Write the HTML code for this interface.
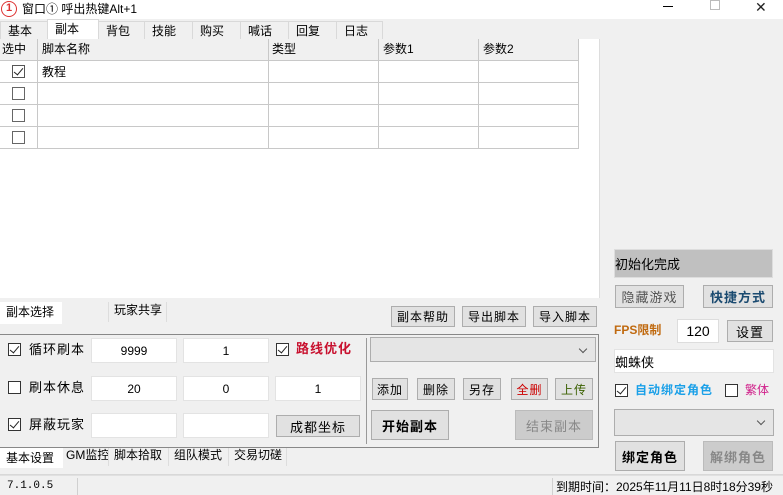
<!DOCTYPE html>
<html><head><meta charset="utf-8"><style>
*{box-sizing:border-box;margin:0;padding:0}
body{width:783px;height:495px;position:relative;background:#f0f0f0;font-family:"Liberation Sans","Noto Sans CJK SC",sans-serif;font-size:12px;color:#000;overflow:hidden}
.a{position:absolute}
.t{position:absolute;white-space:nowrap;line-height:1}
.btn{position:absolute;background:#e1e1e1;border:1px solid #adadad;text-align:center;font-size:12px;display:flex;align-items:center;justify-content:center;letter-spacing:1px}
.inp{position:absolute;background:#fff;border:1px solid #e3e3e3;display:flex;align-items:center;justify-content:center;font-size:12px}
.cb{position:absolute;width:13px;height:13px;border:1px solid #333;background:#fff}
.cb.c::after{content:"";position:absolute;left:3px;top:0px;width:4px;height:8px;border:solid #222;border-width:0 1.5px 1.5px 0;transform:rotate(40deg)}
.tab{position:absolute;top:21px;height:18px;border:1px solid #d9d9d9;border-bottom:none;background:#f0f0f0;font-size:12px;line-height:14px;padding:2px 0 0 7px}
.cell{position:absolute;border-right:1px solid #c8c8c8;border-bottom:1px solid #c8c8c8}
.dd{position:absolute;background:#e5e5e5;border:1px solid #adadad}
.dd::after{content:"";position:absolute;right:9px;top:8px;width:5px;height:5px;border:solid #555;border-width:0 1px 1px 0;transform:rotate(45deg)}
</style></head><body>
<div class="a" style="left:0;top:0;width:783px;height:19px;background:#fff"></div>
<div class="a" style="left:1px;top:1px;width:16px;height:16px;border:1.5px solid #d33;border-radius:50%;color:#d33;font-size:11px;text-align:center;line-height:13px;font-weight:bold">1</div>
<div class="t" style="left:22px;top:3px;font-size:12px">窗口① 呼出热键Alt+1</div>
<div class="a" style="left:663px;top:6px;width:10px;height:1px;background:#000"></div>
<div class="a" style="left:710px;top:0px;width:10px;height:10px;border:1px solid #bbb"></div>
<div class="t" style="left:755px;top:0px;font-size:14px;color:#222">✕</div>
<div class="tab" style="left:0;width:48px">基本</div>
<div class="tab" style="left:98px;width:47px">背包</div>
<div class="tab" style="left:144px;width:49px">技能</div>
<div class="tab" style="left:192px;width:49px">购买</div>
<div class="tab" style="left:240px;width:49px">喊话</div>
<div class="tab" style="left:288px;width:49px">回复</div>
<div class="tab" style="left:336px;width:47px">日志</div>
<div class="tab" style="left:47px;top:19px;height:21px;width:52px;background:#fff;padding-top:2px">副本</div>
<div class="a" style="left:0;top:39px;width:600px;height:259px;background:#fff;border-right:1px solid #ddd"></div>
<div class="a" style="left:0;top:39px;width:579px;height:21px;background:#f0f0f0"></div>
<div class="cell" style="left:0;top:39px;width:38px;height:22px"></div><div class="t" style="left:2px;top:43px">选中</div>
<div class="cell" style="left:37px;top:39px;width:232px;height:22px"></div><div class="t" style="left:42px;top:43px">脚本名称</div>
<div class="cell" style="left:268px;top:39px;width:111px;height:22px"></div><div class="t" style="left:272px;top:43px">类型</div>
<div class="cell" style="left:378px;top:39px;width:101px;height:22px"></div><div class="t" style="left:383px;top:43px">参数1</div>
<div class="cell" style="left:478px;top:39px;width:101px;height:22px"></div><div class="t" style="left:483px;top:43px">参数2</div>
<div class="a" style="left:0;top:60px;width:579px;height:88px">
 <div class="cell" style="left:0;top:0;width:38px;height:23px"></div><div class="cell" style="left:37px;top:0;width:232px;height:23px"></div><div class="cell" style="left:268px;top:0;width:111px;height:23px"></div><div class="cell" style="left:378px;top:0;width:101px;height:23px"></div><div class="cell" style="left:478px;top:0;width:101px;height:23px"></div>
 <div class="cell" style="left:0;top:22px;width:38px;height:23px"></div><div class="cell" style="left:37px;top:22px;width:232px;height:23px"></div><div class="cell" style="left:268px;top:22px;width:111px;height:23px"></div><div class="cell" style="left:378px;top:22px;width:101px;height:23px"></div><div class="cell" style="left:478px;top:22px;width:101px;height:23px"></div>
 <div class="cell" style="left:0;top:44px;width:38px;height:23px"></div><div class="cell" style="left:37px;top:44px;width:232px;height:23px"></div><div class="cell" style="left:268px;top:44px;width:111px;height:23px"></div><div class="cell" style="left:378px;top:44px;width:101px;height:23px"></div><div class="cell" style="left:478px;top:44px;width:101px;height:23px"></div>
 <div class="cell" style="left:0;top:66px;width:38px;height:23px"></div><div class="cell" style="left:37px;top:66px;width:232px;height:23px"></div><div class="cell" style="left:268px;top:66px;width:111px;height:23px"></div><div class="cell" style="left:378px;top:66px;width:101px;height:23px"></div><div class="cell" style="left:478px;top:66px;width:101px;height:23px"></div>
</div>
<div class="cb c" style="left:12px;top:65px;border-color:#555"></div>
<div class="t" style="left:42px;top:66px">教程</div>
<div class="cb" style="left:12px;top:87px;border-color:#666"></div>
<div class="cb" style="left:12px;top:109px;border-color:#666"></div>
<div class="cb" style="left:12px;top:131px;border-color:#666"></div>
<div class="a" style="left:0;top:302px;width:62px;height:22px;background:#fff"></div>
<div class="t" style="left:6px;top:306px">副本选择</div>
<div class="a" style="left:62px;top:302px;width:47px;height:20px;border-right:1px solid #ddd"></div>
<div class="t" style="left:114px;top:304px">玩家共享</div>
<div class="a" style="left:109px;top:302px;width:58px;height:20px;border-right:1px solid #ddd"></div>
<div class="btn" style="left:391px;top:306px;width:64px;height:21px">副本帮助</div>
<div class="btn" style="left:462px;top:306px;width:64px;height:21px">导出脚本</div>
<div class="btn" style="left:533px;top:306px;width:64px;height:21px">导入脚本</div>
<div class="a" style="left:0;top:334px;width:599px;height:114px;border:1px solid #888;border-left:none"></div>
<div class="a" style="left:366px;top:338px;width:1px;height:106px;background:#999"></div>
<div class="cb c" style="left:8px;top:343px"></div><div class="t" style="left:29px;top:343px;font-size:13px;letter-spacing:1px">循环刷本</div>
<div class="inp" style="left:91px;top:338px;width:86px;height:25px">9999</div>
<div class="inp" style="left:183px;top:338px;width:86px;height:25px">1</div>
<div class="cb c" style="left:276px;top:343px"></div><div class="t" style="left:296px;top:342px;font-size:13px;color:#c8102e;font-weight:bold;letter-spacing:1px">路线优化</div>
<div class="cb" style="left:8px;top:381px"></div><div class="t" style="left:29px;top:381px;font-size:13px;letter-spacing:1px">刷本休息</div>
<div class="inp" style="left:91px;top:376px;width:86px;height:25px">20</div>
<div class="inp" style="left:183px;top:376px;width:86px;height:25px">0</div>
<div class="inp" style="left:275px;top:376px;width:86px;height:25px">1</div>
<div class="cb c" style="left:8px;top:418px"></div><div class="t" style="left:29px;top:418px;font-size:13px;letter-spacing:1px">屏蔽玩家</div>
<div class="inp" style="left:91px;top:413px;width:86px;height:25px"></div>
<div class="inp" style="left:183px;top:413px;width:86px;height:25px"></div>
<div class="btn" style="left:276px;top:415px;width:84px;height:22px;font-size:13px">成都坐标</div>
<div class="dd" style="left:370px;top:337px;width:226px;height:25px"></div>
<div class="btn" style="left:372px;top:378px;width:36px;height:22px">添加</div>
<div class="btn" style="left:417px;top:378px;width:38px;height:22px">删除</div>
<div class="btn" style="left:463px;top:378px;width:38px;height:22px">另存</div>
<div class="btn" style="left:511px;top:378px;width:37px;height:22px;color:#c00">全删</div>
<div class="btn" style="left:555px;top:378px;width:38px;height:22px;color:#3a6000">上传</div>
<div class="btn" style="left:371px;top:410px;width:78px;height:30px;font-size:13px;font-weight:bold">开始副本</div>
<div class="btn" style="left:515px;top:410px;width:78px;height:30px;font-size:13px;color:#888;background:#ccc;border-color:#bbb">结束副本</div>
<div class="a" style="left:0;top:448px;width:63px;height:20px;background:#fff"></div>
<div class="t" style="left:6px;top:452px">基本设置</div>
<div class="t" style="left:66px;top:449px">GM监控</div><div class="a" style="left:108px;top:448px;width:1px;height:18px;background:#ddd"></div>
<div class="t" style="left:114px;top:449px">脚本拾取</div><div class="a" style="left:168px;top:448px;width:1px;height:18px;background:#ddd"></div>
<div class="t" style="left:174px;top:449px">组队模式</div><div class="a" style="left:228px;top:448px;width:1px;height:18px;background:#ddd"></div>
<div class="t" style="left:234px;top:449px">交易切磋</div><div class="a" style="left:286px;top:448px;width:1px;height:18px;background:#ddd"></div>
<div class="a" style="left:0;top:474px;width:783px;height:2px;background:#e0e0e0;border-top:1px solid #d8d8d8"></div>
<div class="t" style="left:7px;top:481px;font-family:'Liberation Mono',monospace;font-size:11px">7.1.0.5</div>
<div class="a" style="left:77px;top:478px;width:1px;height:17px;background:#d0d0d0"></div>
<div class="a" style="left:552px;top:478px;width:1px;height:17px;background:#d0d0d0"></div>
<div class="t" style="left:556px;top:481px">到期时间：2025年11月11日8时18分39秒</div>
<div class="a" style="left:614px;top:249px;width:159px;height:29px;background:#c0c0c0;border:1px solid #ddd"></div>
<div class="t" style="left:615px;top:258px;font-size:13px">初始化完成</div>
<div class="btn" style="left:615px;top:285px;width:69px;height:23px;color:#555;font-size:13px">隐藏游戏</div>
<div class="btn" style="left:703px;top:285px;width:70px;height:23px;color:#1a4a70;font-size:13px;font-weight:bold">快捷方式</div>
<div class="t" style="left:614px;top:324px;font-size:12px;font-weight:bold;color:#c06a10">FPS限制</div>
<div class="inp" style="left:677px;top:319px;width:42px;height:24px;font-size:14px;border-color:#ddd">120</div>
<div class="btn" style="left:727px;top:320px;width:46px;height:22px;font-size:13px">设置</div>
<div class="inp" style="left:614px;top:349px;width:160px;height:24px;justify-content:flex-start;font-size:13px">蜘蛛侠</div>
<div class="cb c" style="left:615px;top:384px;border-color:#333"></div>
<div class="t" style="left:635px;top:384px;font-size:12px;font-weight:bold;color:#1aa0e8;letter-spacing:1px">自动绑定角色</div>
<div class="cb" style="left:725px;top:384px"></div>
<div class="t" style="left:745px;top:384px;font-size:12px;color:#d0208a">繁体</div>
<div class="dd" style="left:614px;top:409px;width:160px;height:27px"></div>
<div class="btn" style="left:615px;top:441px;width:70px;height:30px;font-size:13px;font-weight:bold">绑定角色</div>
<div class="btn" style="left:703px;top:441px;width:70px;height:30px;font-size:13px;font-weight:bold;color:#888;background:#ccc;border-color:#bbb">解绑角色</div>
</body></html>
